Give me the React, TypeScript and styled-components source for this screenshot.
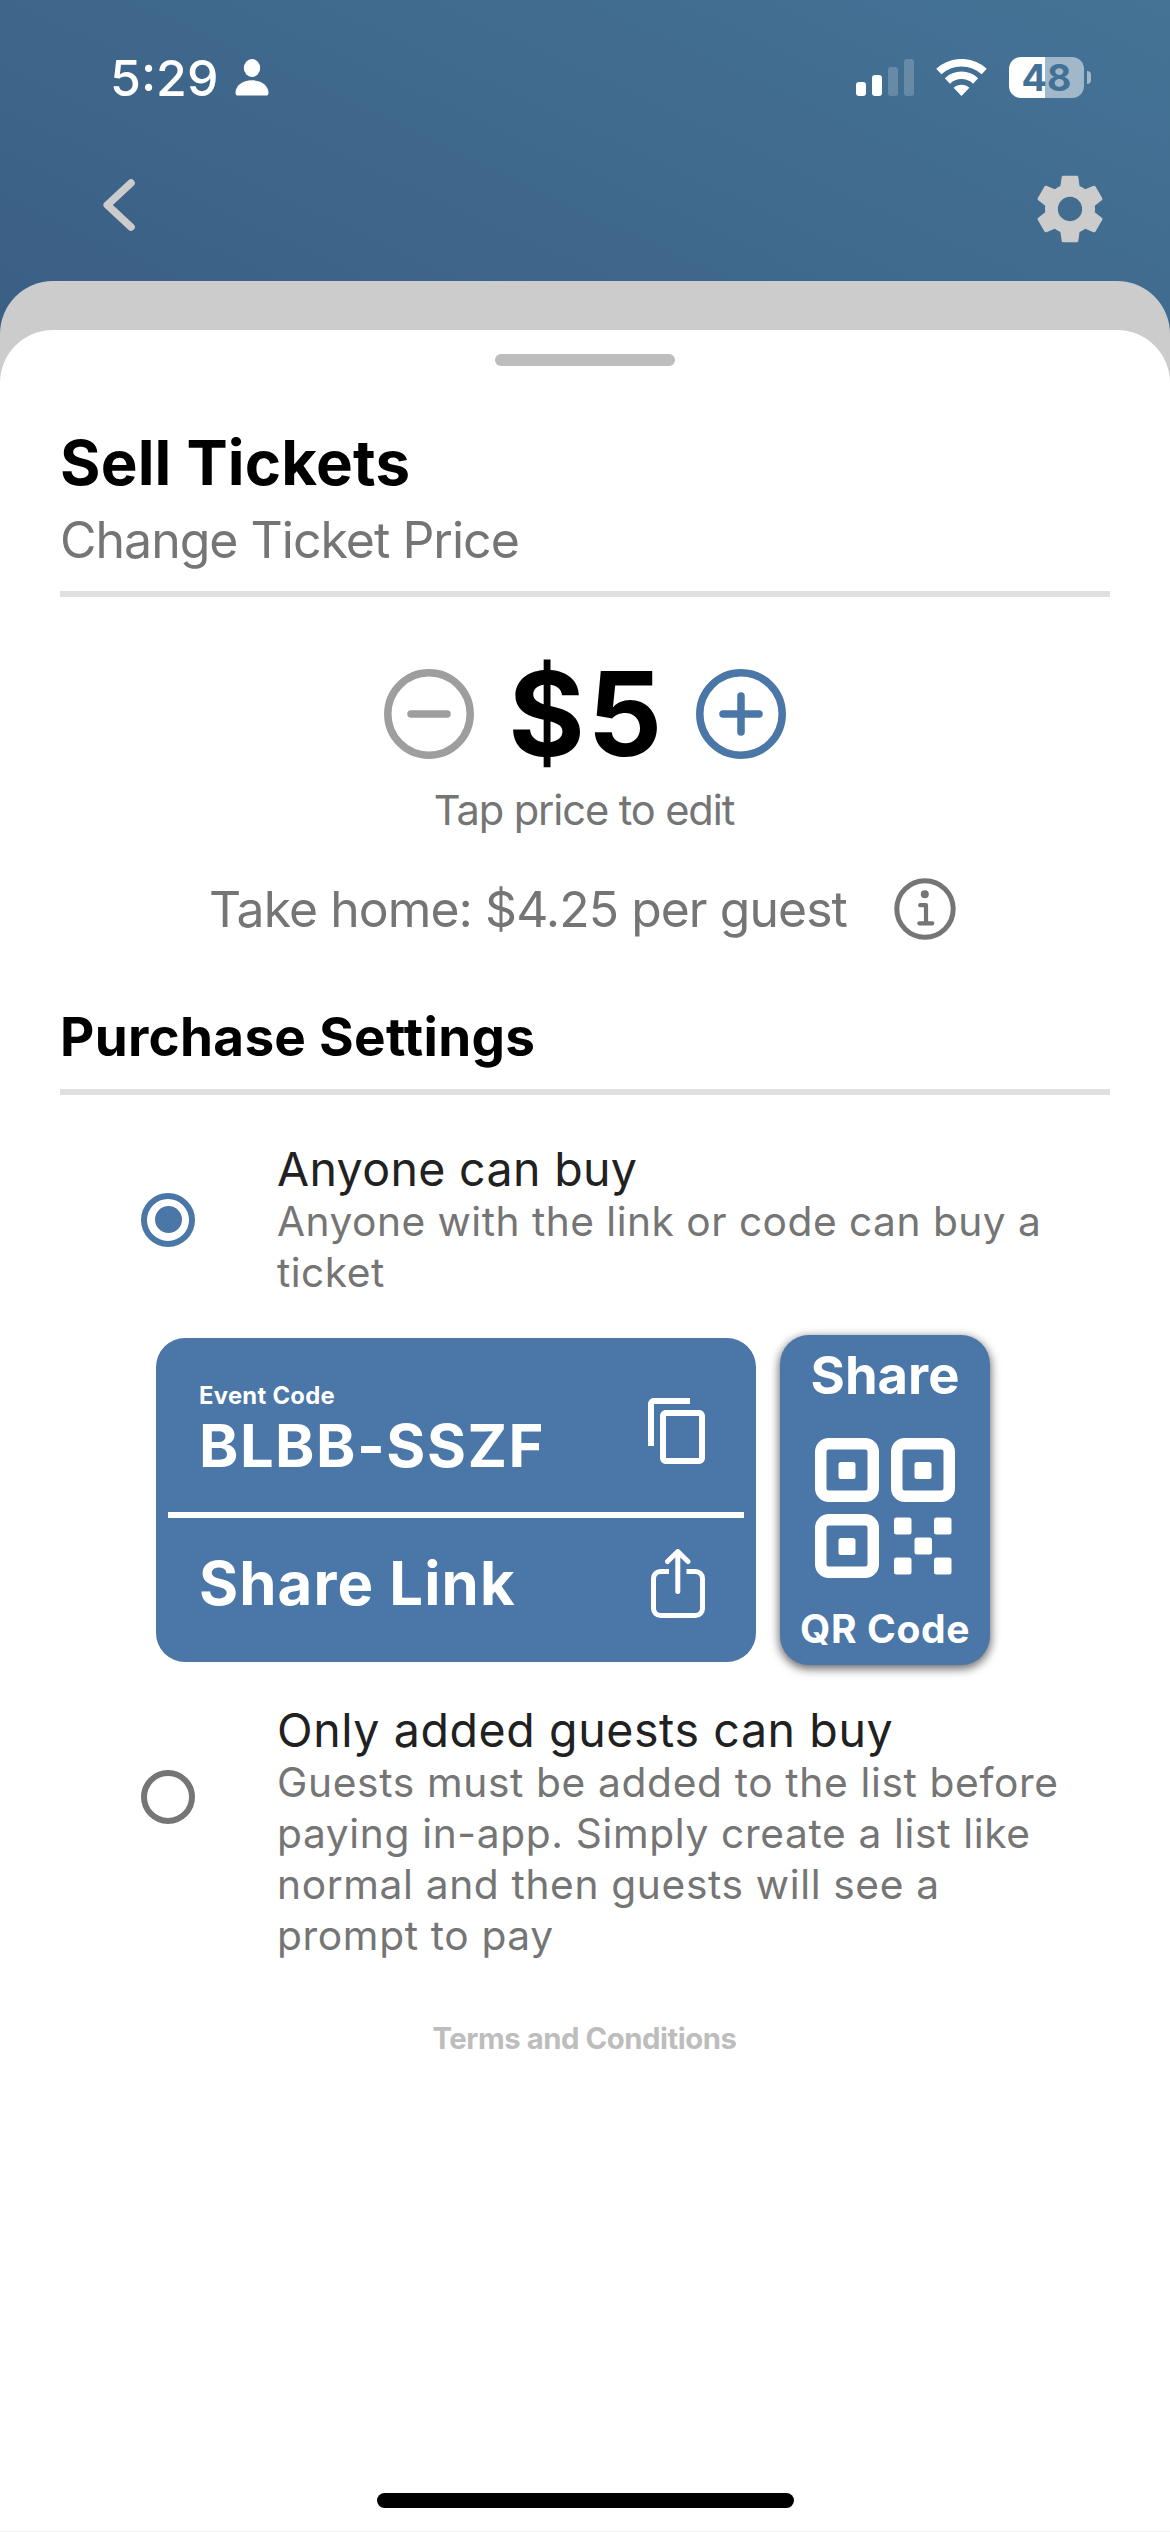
import React from "react";
import styled, { createGlobalStyle } from "styled-components";

const BLUE = "#4a76a8";
const GREY = "#757575";

const GlobalStyle = createGlobalStyle`
  *, *::before, *::after { box-sizing: border-box; }
  body { margin: 0; background: #fff; font-family: Inter, "Liberation Sans", sans-serif; }
  svg { display: block; flex: none; }
  h1, h2, p { margin: 0; }
  button { border: 0; padding: 0; background: none; color: inherit; font: inherit; text-align: left; }
`;

const Screen = styled.div`
  width: 1170px;
  height: 2532px;
  display: flex;
  flex-direction: column;
  overflow: hidden;
  background: linear-gradient(25deg, #3b5e84, #447396) top / 1170px 340px no-repeat;
`;

/* Status bar */

const StatusBar = styled.div`
  height: 155px;
  flex: none;
  display: flex;
  align-items: center;
  padding: 0 79px 0 110px;
  color: #fff;
`;

const Clock = styled.span`
  width: 125px;
  font-size: 50px;
  line-height: 60px;
  font-weight: 550;
`;

const StatusIcons = styled.div`
  margin-left: auto;
  display: flex;
  align-items: center;
`;

const WifiSlot = styled.span`
  margin-left: 22px;
`;

const Battery = styled.div`
  display: flex;
  align-items: center;
  gap: 3px;
  margin-left: 22px;
`;

const BatteryBody = styled.div`
  width: 75px;
  height: 41px;
  border-radius: 12px;
  background: linear-gradient(90deg, #fff 36px, #a1b8cb 36px);
  color: #437195;
  font-size: 37.5px;
  line-height: 41px;
  font-weight: 700;
  text-align: center;
`;

const BatteryCap = styled.div`
  width: 4px;
  height: 13px;
  border-radius: 0 4px 4px 0;
  background: #a1b8cb;
`;

/* Navigation bar */

const NavBar = styled.div`
  height: 126px;
  flex: none;
  display: flex;
  justify-content: space-between;
  align-items: flex-start;
  padding: 13.5px 60.5px 0 99px;
  color: #ccc;
`;

const BackButton = styled.button`
  padding-top: 6.5px;
`;

/* Sheets */

const BackSheet = styled.div`
  flex: 1;
  display: flex;
  padding-top: 49px;
  background: #ccc;
  border-radius: 53px 53px 0 0;
`;

const Sheet = styled.main`
  flex: 1;
  display: flex;
  flex-direction: column;
  padding: 24px 60px 23px;
  background: #fff;
  border-radius: 53px 53px 0 0;
  border-bottom: 1px solid #f0f0f0;
`;

const Handle = styled.div`
  align-self: center;
  width: 180px;
  height: 12px;
  border-radius: 6px;
  background: #bdbdbd;
`;

const Title = styled.h1`
  margin-top: 61px;
  margin-bottom: 1px;
  font-size: 61.8px;
  line-height: 72px;
  font-weight: 700;
  letter-spacing: 0.2px;
`;

const Subtitle = styled.p`
  margin-top: 10px;
  font-size: 50px;
  line-height: 60px;
  letter-spacing: -1px;
  color: ${GREY};
`;

const Divider = styled.div<{ $gap: number }>`
  height: 6px;
  flex: none;
  margin-top: ${(p) => p.$gap}px;
  background: #e0e0e0;
`;

const PriceRow = styled.div`
  height: 119px;
  margin-top: 57px;
  display: flex;
  align-items: center;
  justify-content: center;
`;

const Price = styled.span`
  width: 222px;
  padding-left: 3px;
  text-align: center;
  font-size: 117px;
  line-height: 119px;
  font-weight: 700;
  letter-spacing: 2.5px;
`;

const PriceHint = styled.p`
  margin: 12px 2px 0 0;
  font-size: 41.6px;
  line-height: 50px;
  letter-spacing: -1.1px;
  text-align: center;
  color: ${GREY};
`;

const TakeHome = styled.div`
  height: 61px;
  margin-top: 43px;
  padding-left: 149px;
  display: flex;
  align-items: center;
  color: ${GREY};
`;

const TakeHomeText = styled.span`
  width: 685px;
  white-space: nowrap;
  font-size: 49.8px;
  line-height: 60px;
  letter-spacing: -0.9px;
`;

const SectionTitle = styled.h2`
  margin-top: 66px;
  font-size: 53px;
  line-height: 64px;
  font-weight: 700;
  letter-spacing: 0.3px;
`;

/* Purchase options */

const Option = styled.div<{ $gap: number }>`
  display: flex;
  align-items: flex-start;
  gap: 82px;
  margin-top: ${(p) => p.$gap}px;
  padding-left: 81px;
`;

const Radio = styled.span<{ $on?: boolean; $drop: number }>`
  width: 54px;
  height: 54px;
  flex: none;
  margin-top: ${(p) => p.$drop}px;
  display: grid;
  place-items: center;
  border: 6px solid ${(p) => (p.$on ? BLUE : GREY)};
  border-radius: 50%;

  &::after {
    content: "";
    width: 27px;
    height: 27px;
    border-radius: 50%;
    background: ${(p) => (p.$on ? BLUE : "transparent")};
  }
`;

const OptionText = styled.div`
  width: 787px;
`;

const OptionTitle = styled.p<{ $tracking: number }>`
  font-size: 46.5px;
  line-height: 54px;
  letter-spacing: ${(p) => p.$tracking}px;
  color: #212121;
`;

const OptionDetail = styled.p<{ $tracking: number }>`
  font-size: 40.7px;
  line-height: 51px;
  letter-spacing: ${(p) => p.$tracking}px;
  color: ${GREY};
`;

/* Share cards */

const ShareCards = styled.div`
  display: flex;
  align-items: center;
  gap: 24px;
  margin-top: 37px;
  padding-left: 96px;
  color: #fff;
  font-weight: 700;
`;

const LinkCard = styled.div`
  width: 600px;
  height: 324px;
  border-radius: 29px;
  background: ${BLUE};
`;

const CardRow = styled.button<{ $height: number; $top: number }>`
  width: 100%;
  height: ${(p) => p.$height}px;
  display: flex;
  justify-content: space-between;
  align-items: flex-start;
  padding: ${(p) => p.$top}px 42px 0 43px;
`;

const CardRule = styled.div`
  height: 6px;
  margin: 0 12px;
  background: #fff;
`;

const CodeLabel = styled.div`
  font-size: 23.8px;
  line-height: 34px;
  letter-spacing: 0.3px;
`;

const CodeValue = styled.div`
  font-size: 59.6px;
  line-height: 65px;
  letter-spacing: 1.5px;
`;

const ShareLabel = styled.span`
  font-size: 59.8px;
  line-height: 69px;
  letter-spacing: 1.1px;
`;

const IconDrop = styled.span`
  padding-top: 16px;
`;

const QrCard = styled.button`
  width: 210px;
  height: 330px;
  display: flex;
  flex-direction: column;
  align-items: center;
  justify-content: flex-start;
  padding-top: 10px;
  border-radius: 29px;
  background: ${BLUE};
  box-shadow: 0 3px 10px 1px rgba(0, 0, 0, 0.58);
`;

const QrTitle = styled.span`
  margin-bottom: 33px;
  font-size: 52.5px;
  line-height: 60px;
`;

const QrCaption = styled.span`
  margin-top: 28px;
  font-size: 39px;
  line-height: 46px;
  letter-spacing: 0.6px;
  white-space: nowrap;
`;

const Terms = styled.p`
  margin: 60px 1px 0 0;
  font-size: 29.3px;
  line-height: 36px;
  font-weight: 700;
  letter-spacing: -0.45px;
  text-align: center;
  color: #bdbdbd;
`;

const HomeIndicator = styled.div`
  align-self: center;
  width: 417px;
  height: 15px;
  margin-top: auto;
  border-radius: 8px;
  background: #000;
`;

/* Icons */

const PersonIcon = () => (
  <svg width="34" height="37" viewBox="0 0 34 37" fill="#fff">
    <ellipse cx="17" cy="9" rx="8.2" ry="9" />
    <path d="M3 36.5c-1.5 0-2.5-1-2.5-2.6C.5 27 7 21.3 17 21.3S33.5 27 33.5 33.9c0 1.6-1 2.6-2.5 2.6z" />
  </svg>
);

const SignalIcon = () => (
  <svg width="58" height="37" viewBox="0 0 58 37" fill="#fff">
    <rect x="0" y="23" width="10" height="14" rx="3" />
    <rect x="16" y="16" width="10" height="21" rx="3" />
    <rect x="32" y="8" width="10" height="29" rx="3" opacity=".2" />
    <rect x="48" y="0" width="10" height="37" rx="3" opacity=".2" />
  </svg>
);

const WifiIcon = () => (
  <svg width="51" height="37" viewBox="0 0 51 37" fill="none" stroke="#fff" strokeWidth="7.5">
    <path d="M2.8 12.6A33.3 33.3 0 0 1 48.2 12.6" />
    <path d="M11.4 21.9A20.7 20.7 0 0 1 39.6 21.9" />
    <path d="M25.5 37L17.6 28.8A11.5 11.5 0 0 1 33.4 28.8Z" fill="#fff" stroke="none" />
  </svg>
);

const ChevronIcon = () => (
  <svg
    width="40"
    height="60"
    viewBox="0 0 40 60"
    fill="none"
    stroke="currentColor"
    strokeWidth="7.6"
    strokeLinecap="round"
    strokeLinejoin="round"
  >
    <path d="M32 8L8.3 30L32 52" />
  </svg>
);

const GearIcon = () => (
  <svg width="80" height="80" viewBox="0 0 24 24" fill="currentColor">
    <path d="M19.43 12.98c.04-.32.07-.64.07-.98s-.03-.66-.07-.98l2.11-1.65c.19-.15.24-.42.12-.64l-2-3.46c-.12-.22-.39-.3-.61-.22l-2.49 1c-.52-.4-1.08-.73-1.69-.98l-.38-2.65C14.46 2.18 14.25 2 14 2h-4c-.25 0-.46.18-.49.42l-.38 2.65c-.61.25-1.17.59-1.69.98l-2.49-1c-.23-.09-.49 0-.61.22l-2 3.46c-.13.22-.07.49.12.64l2.11 1.65c-.04.32-.07.65-.07.98s.03.66.07.98l-2.11 1.65c-.19.15-.24.42-.12.64l2 3.46c.12.22.39.3.61.22l2.49-1c.52.4 1.08.73 1.69.98l.38 2.65c.03.24.24.42.49.42h4c.25 0 .46-.18.49-.42l.38-2.65c.61-.25 1.17-.59 1.69-.98l2.49 1c.23.09.49 0 .61-.22l2-3.46c.12-.22.07-.49-.12-.64l-2.11-1.65zM12 15.65a3.65 3.65 0 1 1 0-7.3a3.65 3.65 0 0 1 0 7.3z" />
  </svg>
);

const StepIcon = ({ plus }: { plus?: boolean }) => (
  <svg
    width="90"
    height="90"
    viewBox="0 0 90 90"
    fill="none"
    stroke={plus ? BLUE : "#9e9e9e"}
    strokeWidth="7.5"
    strokeLinecap="round"
  >
    <circle cx="45" cy="45" r="41.2" />
    <path d={plus ? "M27 45H63M45 27V63" : "M27 45H63"} />
  </svg>
);

const InfoIcon = () => (
  <svg
    width="62"
    height="62"
    viewBox="0 0 62 62"
    fill="none"
    stroke="currentColor"
    strokeWidth="4.2"
    strokeLinecap="round"
    strokeLinejoin="round"
  >
    <circle cx="31" cy="31" r="28.2" strokeWidth="5" />
    <circle cx="30.8" cy="16.3" r="4" fill="currentColor" stroke="none" />
    <path d="M26.2 27.2H32V45.3M25.3 45.3H38.3" />
  </svg>
);

const CopyIcon = () => (
  <svg width="72" height="72" viewBox="0 0 24 24" fill="currentColor">
    <path d="M16 1H4c-1.1 0-2 .9-2 2v14h2V3h12V1zm3 4H8c-1.1 0-2 .9-2 2v14c0 1.1.9 2 2 2h11c1.1 0 2-.9 2-2V7c0-1.1-.9-2-2-2zm0 16H8V7h11v14z" />
  </svg>
);

const ShareIcon = () => (
  <svg
    width="72"
    height="72"
    viewBox="0 0 72 72"
    fill="none"
    stroke="currentColor"
    strokeWidth="5"
    strokeLinecap="round"
    strokeLinejoin="round"
  >
    <path
      d="M27 22.5H18.5a7 7 0 0 0-7 7V59.5a7 7 0 0 0 7 7H53.5a7 7 0 0 0 7-7V29.5a7 7 0 0 0-7-7H44.5"
      strokeLinecap="butt"
    />
    <path d="M35.8 3.5V42.5M25.5 12.5L35.8 2.5L46 12.5" />
  </svg>
);

const QR_FINDERS = [[0, 0], [76, 0], [0, 76]];
const QR_DOTS = [[79, 79.5], [119, 79.5], [99.5, 99.5], [79, 119.5], [119, 119.5]];

const QrIcon = () => (
  <svg width="140" height="140" viewBox="0 0 140 140" fill="#fff">
    {QR_FINDERS.map(([x, y]) => (
      <g key={`${x}-${y}`}>
        <rect
          x={x + 5.75}
          y={y + 5.75}
          width="52.5"
          height="52.5"
          rx="8"
          fill="none"
          stroke="#fff"
          strokeWidth="11.5"
        />
        <rect x={x + 23.5} y={y + 24} width="17" height="17" rx="2.5" />
      </g>
    ))}
    {QR_DOTS.map(([x, y]) => (
      <rect key={`${x}-${y}`} x={x} y={y} width="17.5" height="17" rx="2.5" />
    ))}
  </svg>
);

export default function App() {
  return (
    <>
      <GlobalStyle />
      <Screen>
        <StatusBar>
          <Clock>5:29</Clock>
          <PersonIcon />
          <StatusIcons>
            <SignalIcon />
            <WifiSlot>
              <WifiIcon />
            </WifiSlot>
            <Battery>
              <BatteryBody>48</BatteryBody>
              <BatteryCap />
            </Battery>
          </StatusIcons>
        </StatusBar>
        <NavBar>
          <BackButton aria-label="Back">
            <ChevronIcon />
          </BackButton>
          <button aria-label="Settings">
            <GearIcon />
          </button>
        </NavBar>
        <BackSheet>
          <Sheet>
            <Handle />
            <Title>Sell Tickets</Title>
            <Subtitle>Change Ticket Price</Subtitle>
            <Divider $gap={21} />

            <PriceRow>
              <button aria-label="Lower price">
                <StepIcon />
              </button>
              <Price>$5</Price>
              <button aria-label="Raise price">
                <StepIcon plus />
              </button>
            </PriceRow>
            <PriceHint>Tap price to edit</PriceHint>
            <TakeHome>
              <TakeHomeText>Take home: $4.25 per guest</TakeHomeText>
              <InfoIcon />
            </TakeHome>

            <SectionTitle>Purchase Settings</SectionTitle>
            <Divider $gap={20} />

            <Option $gap={47}>
              <Radio $on $drop={50.5} />
              <OptionText>
                <OptionTitle $tracking={0.35}>Anyone can buy</OptionTitle>
                <OptionDetail $tracking={0.48}>
                  Anyone with the link or code can buy a ticket
                </OptionDetail>
              </OptionText>
            </Option>

            <ShareCards>
              <LinkCard>
                <CardRow $height={174} $top={40.5}>
                  <span>
                    <CodeLabel>Event Code</CodeLabel>
                    <CodeValue>BLBB-SSZF</CodeValue>
                  </span>
                  <IconDrop>
                    <CopyIcon />
                  </IconDrop>
                </CardRow>
                <CardRule />
                <CardRow $height={144} $top={31}>
                  <ShareLabel>Share Link</ShareLabel>
                  <ShareIcon />
                </CardRow>
              </LinkCard>
              <QrCard>
                <QrTitle>Share</QrTitle>
                <QrIcon />
                <QrCaption>QR Code</QrCaption>
              </QrCard>
            </ShareCards>

            <Option $gap={37.5}>
              <Radio $drop={67.5} />
              <OptionText>
                <OptionTitle $tracking={0.6}>Only added guests can buy</OptionTitle>
                <OptionDetail $tracking={0.64}>
                  Guests must be added to the list before paying in-app. Simply create a list like
                  normal and then guests will see a prompt to pay
                </OptionDetail>
              </OptionText>
            </Option>

            <Terms>Terms and Conditions</Terms>
            <HomeIndicator />
          </Sheet>
        </BackSheet>
      </Screen>
    </>
  );
}
